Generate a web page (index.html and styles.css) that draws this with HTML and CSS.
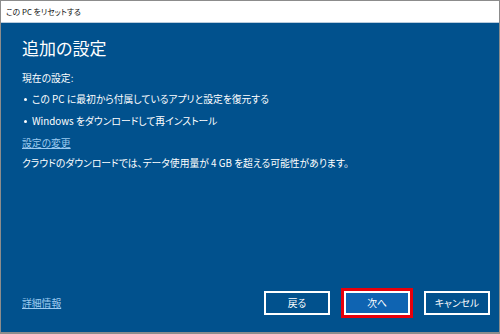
FILE: index.html
```html
<!DOCTYPE html>
<html lang="ja">
<head>
    <meta charset="UTF-8">
    <meta name="viewport" content="width=device-width, initial-scale=1.0">
    <title>この PC をリセットする</title>
    <link rel="stylesheet" href="styles.css">
</head>
<body>
    <div class="window">
        <div class="titlebar">この PC をリセットする</div>

        <main class="content">
            <h1>追加の設定</h1>
            <p class="label">現在の設定:</p>
            <ul class="settings">
                <li>この PC に最初から付属しているアプリと設定を復元する</li>
                <li>Windows をダウンロードして再インストール</li>
            </ul>
            <a class="link change" href="#">設定の変更</a>
            <p class="note">クラウドのダウンロードでは、データ使用量が 4 GB を超える可能性があります。</p>

            <footer class="footer">
                <a class="link" href="#">詳細情報</a>
                <div class="buttons">
                    <button class="btn">戻る</button>
                    <button class="btn btn-primary highlight">次へ</button>
                    <button class="btn">キャンセル</button>
                </div>
            </footer>
        </main>
    </div>
</body>
</html>
```

FILE: styles.css
```css
:root {
    --panel-color: #01518d;
    --primary-color: #0f64b2;
    --link-color: #9ccaf0;
    --border-color: #8c8c8c;
}

* {
    margin: 0;
    padding: 0;
    box-sizing: border-box;
    font-family: "Noto Sans CJK JP", "Noto Sans", sans-serif;
    font-feature-settings: "palt";
}

body {
    width: 500px;
    height: 334px;
    overflow: hidden;
}

.window {
    display: flex;
    flex-direction: column;
    height: 334px;
    border: 1px solid var(--border-color);
    border-bottom-width: 2px;
}

.titlebar {
    height: 22px;
    padding-left: 5px;
    font-size: 7.8px;
    line-height: 21px;
    color: #111;
    background: white;
    border-bottom: 1px solid #b9cbdc;
}

.content {
    flex: 1;
    display: flex;
    flex-direction: column;
    padding: 0 9px 0 21px;
    background-color: var(--panel-color);
    color: white;
    font-size: 9.8px;
}

h1 {
    margin-top: 15px;
    font-size: 17px;
    font-weight: normal;
    line-height: 20px;
    margin-bottom: 11px;
}

.label {
    line-height: 19px;
}

.settings {
    list-style: none;
}

.settings li {
    line-height: 22px;
    padding-left: 10px;
    position: relative;
}

.settings li::before {
    content: "";
    position: absolute;
    left: 2px;
    top: 10px;
    width: 3px;
    height: 3px;
    border-radius: 50%;
    background: white;
}

.link {
    color: var(--link-color);
    text-decoration: underline;
}

.change {
    align-self: flex-start;
    line-height: 22px;
}

.note {
    line-height: 18px;
}

.footer {
    margin-top: auto;
    display: flex;
    justify-content: space-between;
    align-items: center;
    padding-bottom: 17px;
}

.footer .link {
    margin-bottom: 1px;
}

.buttons {
    display: flex;
    gap: 14px;
}

button {
    width: 66px;
    height: 24px;
    border: 2px solid white;
    background: var(--panel-color);
    color: white;
    font-size: 9.8px;
    cursor: pointer;
}

.btn-primary {
    background-color: var(--primary-color);
}

.highlight {
    position: relative;
}

.highlight::after {
    content: "";
    position: absolute;
    inset: -5px;
    border: 3px solid #e8000b;
}
```
